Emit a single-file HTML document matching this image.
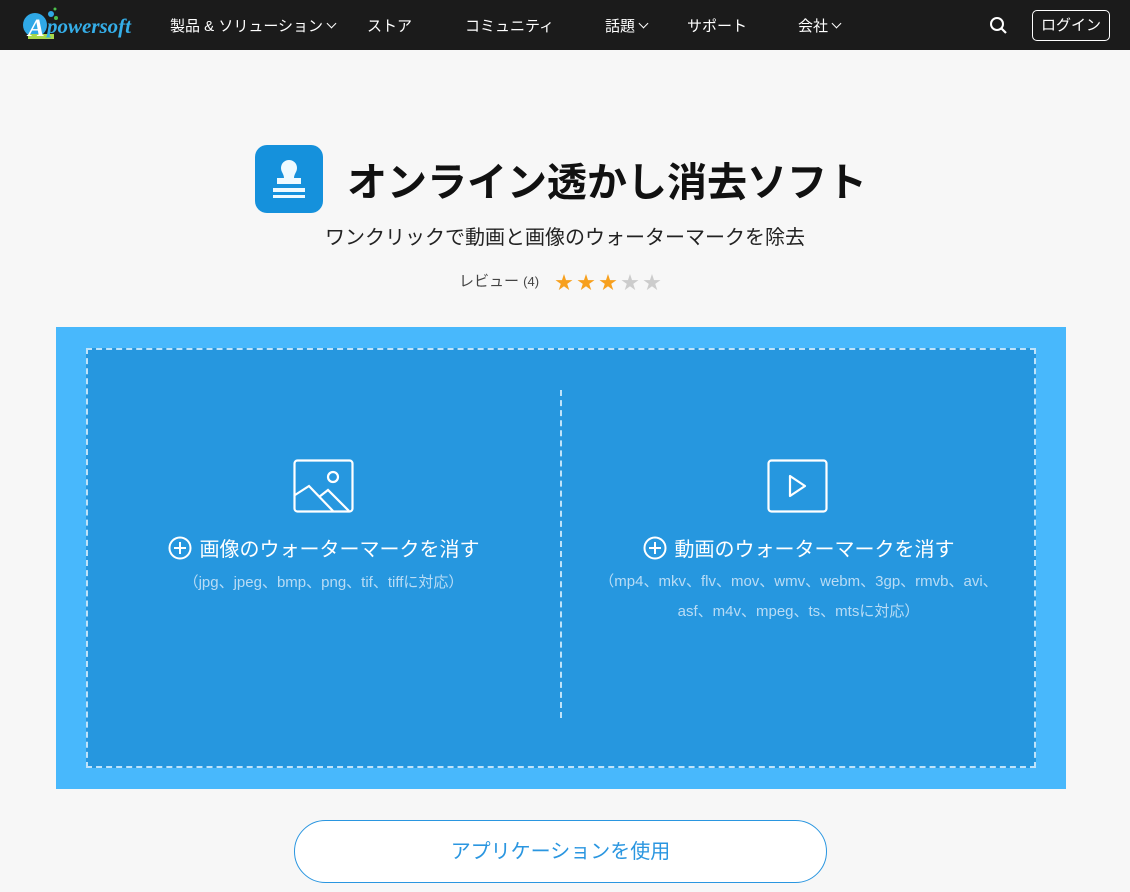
<!DOCTYPE html>
<html><head><meta charset="utf-8"><style>
*{margin:0;padding:0;box-sizing:border-box}
body{width:1130px;height:892px;overflow:hidden;background:#f7f7f7;font-family:"Liberation Sans","Noto Sans CJK JP",sans-serif;position:relative}
.nav{position:absolute;left:0;top:0;width:1130px;height:50px;background:#1b1b1b;color:#fff;font-size:15px}
.nav span{position:absolute;top:15px;white-space:nowrap}
.chev{display:inline-block;width:7px;height:7px;border-right:1.3px solid #fff;border-bottom:1.3px solid #fff;transform:rotate(45deg);margin-left:5px;position:relative;top:-4px}
.abs{position:absolute}
.ct{position:absolute;text-align:center;white-space:nowrap}
.pl{display:inline-block;vertical-align:-4px;margin-right:8px}
</style></head><body>
<div class="nav">
 <svg class="abs" style="left:18px;top:5px" width="130" height="40">
  <circle cx="17" cy="20" r="12" fill="#2fa8e6"/>
  <rect x="10" y="29" width="26" height="5" fill="#a8d84a"/>
  <circle cx="33" cy="9" r="3" fill="#2fa8e6"/><circle cx="38" cy="13" r="2" fill="#4cc04c"/><circle cx="37" cy="4" r="1.5" fill="#4cc04c"/>
  <text x="10" y="31" font-family="Liberation Serif" font-style="italic" font-weight="bold" font-size="25" fill="#fff">A</text>
  <text x="29" y="28" font-family="Liberation Serif" font-style="italic" font-weight="bold" font-size="21" fill="#35aee8">powersoft</text>
 </svg>
 <span style="left:170px">製品 &amp; ソリューション<i class="chev"></i></span>
 <span style="left:367px">ストア</span>
 <span style="left:465px">コミュニティ</span>
 <span style="left:605px">話題<i class="chev"></i></span>
 <span style="left:687px">サポート</span>
 <span style="left:798px">会社<i class="chev"></i></span>
 <svg class="abs" style="left:989px;top:16px" width="20" height="20"><circle cx="8" cy="8" r="6" stroke="#fff" stroke-width="2" fill="none"/><path d="M12.5 12.5 L17 17" stroke="#fff" stroke-width="2.2"/></svg>
 <div class="abs" style="left:1032px;top:10px;width:78px;height:31px;border:1px solid #fff;border-radius:5px;text-align:center;line-height:29px">ログイン</div>
</div>
<div class="abs" style="left:255px;top:145px;width:68px;height:68px;background:#1591dc;border-radius:12px">
 <svg width="68" height="68"><path d="M29 33 C29 29 26 27 26 23 C26 18 30 15 34 15 C38 15 42 18 42 23 C42 27 39 29 39 33 L46 33 L46 39 L22 39 L22 33 Z" fill="#eefaff"/><rect x="18" y="43" width="32" height="4" fill="#eefaff"/><rect x="18" y="50" width="32" height="3" fill="#eefaff"/></svg>
</div>
<div class="abs" style="left:347px;top:150px;font-size:40px;font-weight:bold;color:#111;white-space:nowrap">オンライン透かし消去ソフト</div>
<div class="ct" style="left:0;width:1130px;top:221px;font-size:20px;color:#222">ワンクリックで動画と画像のウォーターマークを除去</div>
<div class="abs" style="left:459px;top:270px;font-size:15px;color:#444">レビュー <span style="font-size:13px">(4)</span></div>
<div class="abs" style="left:555px;top:269px;font-size:18px;letter-spacing:4px;color:#f7a01e">★★★<span style="color:#ccc">★★</span></div>
<div class="abs" style="left:56px;top:327px;width:1010px;height:462px;background:#48b8fc"></div>
<div class="abs" style="left:86px;top:348px;width:950px;height:420px;background:#2697df;border:2px dashed #bfe3fa"></div>
<div class="abs" style="left:560px;top:390px;height:328px;border-left:2px dashed #bfe3fa"></div>
<svg class="abs" style="left:293px;top:459px" width="62" height="55"><rect x="1.5" y="1.5" width="58" height="51" rx="3" stroke="#fff" stroke-width="2.2" fill="none"/><circle cx="40" cy="18" r="5" stroke="#fff" stroke-width="2.2" fill="none"/><path d="M2 36 L16 27 L40 52 M26 38 L35 31 L56 52" stroke="#fff" stroke-width="2.2" fill="none"/></svg>
<svg class="abs" style="left:767px;top:459px" width="62" height="55"><rect x="1.5" y="1.5" width="58" height="51" rx="3" stroke="#fff" stroke-width="2.2" fill="none"/><path d="M23 17 L38 27 L23 37 Z" stroke="#fff" stroke-width="2.2" fill="none" stroke-linejoin="round"/></svg>
<div class="ct" style="left:86px;width:475px;top:533px;font-size:20px;color:#fff"><svg class="pl" width="24" height="24"><circle cx="12" cy="12" r="10.5" stroke="#fff" stroke-width="2" fill="none"/><path d="M6 12H18M12 6V18" stroke="#fff" stroke-width="2"/></svg>画像のウォーターマークを消す</div>
<div class="ct" style="left:86px;width:475px;top:571px;font-size:15px;color:#b9dcf5">（jpg、jpeg、bmp、png、tif、tiffに対応）</div>
<div class="ct" style="left:561px;width:475px;top:533px;font-size:20px;color:#fff"><svg class="pl" width="24" height="24"><circle cx="12" cy="12" r="10.5" stroke="#fff" stroke-width="2" fill="none"/><path d="M6 12H18M12 6V18" stroke="#fff" stroke-width="2"/></svg>動画のウォーターマークを消す</div>
<div class="ct" style="left:561px;width:475px;top:567px;font-size:15px;line-height:30px;color:#b9dcf5">（mp4、mkv、flv、mov、wmv、webm、3gp、rmvb、avi、<br>asf、m4v、mpeg、ts、mtsに対応）</div>
<div class="abs" style="left:294px;top:820px;width:533px;height:63px;border:1px solid #2a96e0;border-radius:32px;text-align:center;line-height:63px;font-size:20px;color:#2a96e0;background:#fff">アプリケーションを使用</div>
</body></html>
